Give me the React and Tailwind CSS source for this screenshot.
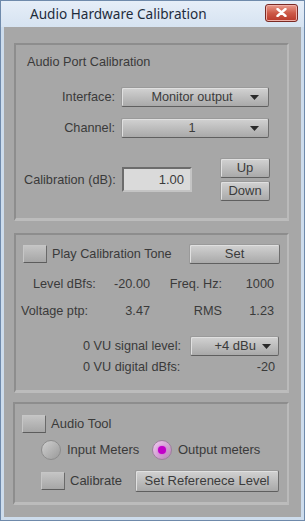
const Btn = ({ className = "", children }) => (
    <div
        className={`flex items-center justify-center rounded-[2px] border border-t-[#9a9a9a] border-l-[#9a9a9a] border-r-[#6e6e6e] border-b-[#5f5f5f] bg-gradient-to-b from-[#d2d2d2] to-[#a9a9a9] text-[#3b3b3b] shadow-[inset_1px_1px_0_#e0e0e0] ${className}`}
    >
        {children}
    </div>
);

const Arrow = () => (
    <svg width="9" height="5" viewBox="0 0 9 5" className="shrink-0">
        <path d="M0 0 H9 L4.5 5 Z" fill="#2a2a2a" />
    </svg>
);

const Select = ({ className = "", children }) => (
    <Btn className={`justify-between pl-3 pr-[9px] ${className}`}>
        <span className="flex-1 text-center">{children}</span>
        <Arrow />
    </Btn>
);

const Check = ({ className = "" }) => (
    <div
        className={`w-[24px] h-[18px] shrink-0 border border-t-[#c6c6c6] border-l-[#c6c6c6] border-r-[#6a6a6a] border-b-[#5c5c5c] bg-gradient-to-b from-[#c4c4c4] to-[#a6a6a6] ${className}`}
    />
);

const Radio = ({ on }) =>
    on ? (
        <div className="w-[20px] h-[20px] rounded-full bg-gradient-to-br from-[#f0c8f0] to-[#b886b8] border border-[#9d7f9d] flex items-center justify-center shrink-0">
            <div className="w-[8px] h-[8px] rounded-full bg-[#c100c8] shadow-[0_0_2px_#e040e8]" />
        </div>
    ) : (
        <div className="w-[20px] h-[20px] rounded-full bg-gradient-to-br from-[#d0d0d0] to-[#9a9a9a] border border-[#8c8c8c] shrink-0" />
    );

const Panel = ({ className = "", children }) => (
    <div
        className={`border-t-2 border-l-2 border-r-2 border-b-[3px] border-t-[#8d8d8d] border-l-[#8d8d8d] border-r-[#bababa] border-b-[#bcbcbc] ${className}`}
    >
        {children}
    </div>
);

export default function App() {
    return (
        <div
            className="w-[305px] h-[521px] flex flex-col bg-[#cddcec] border border-[#6f8aab] text-[12.7px] leading-[14px] text-[#3a3a3a] overflow-hidden"
            style={{ fontFamily: '"Liberation Sans", Arial, sans-serif' }}
        >
            {/* title bar */}
            <div className="h-[26px] shrink-0 flex items-center bg-gradient-to-b from-[#e6eef8] to-[#d6e3f1] pl-[29px] pr-[6px]">
                <span
                    className="flex-1 text-[13.6px] text-[#1e2c3c]"
                    style={{ fontFamily: '"Noto Sans", "Open Sans", sans-serif' }}
                >
                    Audio Hardware Calibration
                </span>
                <div className="w-[33px] h-[18px] mt-[-3px] rounded-[3px] border border-[#7a2a24] bg-gradient-to-b from-[#e89a8c] via-[#cd5a48] to-[#b8382a] flex items-center justify-center shadow-[inset_0_0_0_1px_#f0b0a8]">
                    <svg width="11" height="9" viewBox="0 0 11 9">
                        <path d="M1.5 1 L9.5 8 M9.5 1 L1.5 8" stroke="#fff" strokeWidth="2.4" strokeLinecap="round" />
                    </svg>
                </div>
            </div>

            {/* client area */}
            <div className="flex-1 mx-[3px] mb-[3px] bg-[#a7a7a7] pt-[16px] pl-[10px] pr-[12px] flex flex-col">
                {/* panel 1 */}
                <Panel className="h-[178px] pt-[10px]">
                    <div className="pl-[11px]">Audio Port Calibration</div>
                    <div className="flex items-center mt-[18px]">
                        <div className="w-[99px] text-right">Interface:</div>
                        <Select className="ml-[6px] w-[148px] h-[20px]">Monitor output</Select>
                    </div>
                    <div className="flex items-center mt-[11px]">
                        <div className="w-[99px] text-right">Channel:</div>
                        <Select className="ml-[6px] w-[148px] h-[20px]">1</Select>
                    </div>
                    <div className="flex items-center mt-[20px] pl-[8px]">
                        <div className="w-[93px] whitespace-nowrap">Calibration (dB):</div>
                        <div className="ml-[5px] w-[70px] h-[25px] border-2 border-t-[#6c6c6c] border-l-[#6c6c6c] border-r-[#c4c4c4] border-b-[#c4c4c4] bg-[#dadada] flex items-center justify-end pr-[6px] text-[13px]">
                            1.00
                        </div>
                        <div className="ml-[28px] flex flex-col gap-[3px]">
                            <Btn className="w-[50px] h-[20px] text-[13px]">Up</Btn>
                            <Btn className="w-[50px] h-[20px] text-[13px]">Down</Btn>
                        </div>
                    </div>
                </Panel>

                {/* panel 2 */}
                <Panel className="mt-[12px] h-[160px] pt-[9px]">
                    <div className="flex items-center pl-[7px] pr-[7px]">
                        <Check className="h-[17px]" />
                        <div className="ml-[5px] flex-1">Play Calibration Tone</div>
                        <Btn className="w-[91px] h-[20px] text-[13px]">Set</Btn>
                    </div>
                    <div className="flex mt-[13px]">
                        <div className="w-[134px] flex justify-between">
                            <span className="pl-[17px]">Level dBfs:</span>
                            <span>-20.00</span>
                        </div>
                        <div className="w-[72px] text-right">Freq. Hz:</div>
                        <div className="w-[52px] text-right">1000</div>
                    </div>
                    <div className="flex mt-[13px]">
                        <div className="w-[134px] flex justify-between">
                            <span className="pl-[5px]">Voltage ptp:</span>
                            <span>3.47</span>
                        </div>
                        <div className="w-[72px] text-right">RMS</div>
                        <div className="w-[52px] text-right">1.23</div>
                    </div>
                    <div className="flex items-center mt-[18px] pl-[67px]">
                        <div className="w-[107px]">0 VU signal level:</div>
                        <Btn className="w-[89px] h-[20px] justify-end pr-[7px] gap-[6px] text-[13px]">
                            <span>+4 dBu</span>
                            <Arrow />
                        </Btn>
                    </div>
                    <div className="flex mt-[4px] pl-[67px]">
                        <div className="flex-1">0 VU digital dBfs:</div>
                        <div className="pr-[12px]">-20</div>
                    </div>
                </Panel>

                {/* panel 3 */}
                <Panel className="mt-[9px] -ml-[1px] h-[103px] pt-[11px] text-[13px]">
                    <div className="flex items-center pl-[7px]">
                        <Check />
                        <div className="ml-[5px]">Audio Tool</div>
                    </div>
                    <div className="flex items-center mt-[7px] pl-[26px]">
                        <Radio />
                        <div className="ml-[6px] w-[85px]">Input Meters</div>
                        <Radio on />
                        <div className="ml-[6px]">Output meters</div>
                    </div>
                    <div className="flex items-center mt-[10px] pl-[26px]">
                        <Check />
                        <div className="ml-[5px] w-[65px]">Calibrate</div>
                        <Btn className="w-[144px] h-[22px]">Set Referenece Level</Btn>
                    </div>
                </Panel>
            </div>
        </div>
    );
}
